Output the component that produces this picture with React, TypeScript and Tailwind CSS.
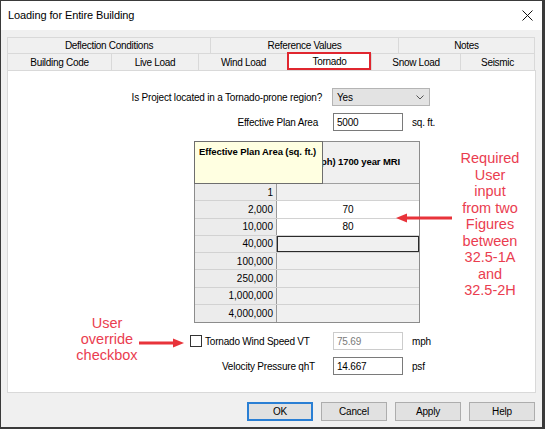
import React from "react";

const rows: [string, string][] = [
  ["1", ""],
  ["2,000", "70"],
  ["10,000", "80"],
  ["40,000", ""],
  ["100,000", ""],
  ["250,000", ""],
  ["1,000,000", ""],
  ["4,000,000", ""],
];

export default function App() {
  return (
    <div className="relative flex h-[429px] w-[545px] flex-col overflow-hidden border-l border-t border-b-2 border-r-[3px] border-[#3a3a3a] bg-[#f0f0f0] font-['Liberation_Sans',Arial,sans-serif] text-black">
      {/* Title bar */}
      <div className="flex h-[29px] shrink-0 items-center justify-between bg-white pl-[7px] pr-[8px]">
        <span className="text-[11px] tracking-[-0.1px]">Loading for Entire Building</span>
        <svg width="11" height="11" viewBox="0 0 11 11" className="mr-[1px]">
          <path d="M0.5 0.5 L10.5 10.5 M10.5 0.5 L0.5 10.5" stroke="#111" strokeWidth="1" />
        </svg>
      </div>

      {/* Body */}
      <div className="flex flex-1 flex-col px-[6px] pt-[7px]">
        {/* Tabs */}
        <div className="mr-[1px] text-[10px] tracking-[-0.3px]">
          <div className="flex h-[16px]">
            <div className="flex w-[203px] items-center justify-center border-l border-t border-[#d9d9d9]">Deflection Conditions</div>
            <div className="flex w-[188px] items-center justify-center border-l border-t border-[#d9d9d9]">Reference Values</div>
            <div className="flex flex-1 items-center justify-center border-l border-r border-t border-[#d9d9d9]">Notes</div>
          </div>
          <div className="flex h-[17px]">
            <div className="flex w-[104px] items-center justify-center border-l border-t border-[#d9d9d9]">Building Code</div>
            <div className="flex w-[87px] items-center justify-center border-l border-t border-[#d9d9d9]">Live Load</div>
            <div className="flex w-[90px] items-center justify-center border-l border-t border-[#d9d9d9]">Wind Load</div>
            <div className="relative flex w-[83px] items-center justify-center bg-white">
              Tornado
              <div className="absolute -left-[1px] -top-[1px] bottom-0 right-0 border-2 border-[#e0262f]" />
            </div>
            <div className="flex w-[89px] items-center justify-center border-l border-t border-[#d9d9d9]">Snow Load</div>
            <div className="flex flex-1 items-center justify-center border-l border-r border-t border-[#d9d9d9]">Seismic</div>
          </div>
        </div>

        {/* Panel */}
        <div className="flex h-[323px] flex-col border border-[#d9d9d9] bg-white pt-[17px] text-[10px] tracking-[-0.2px]">
          {/* Tornado-prone */}
          <div className="flex h-[18px] items-center">
            <div className="w-[324px] pr-[10px] text-right">Is Project located in a Tornado-prone region?</div>
            <div className="flex h-[18px] w-[98px] items-center justify-between border border-[#b4b4b4] bg-[#e3e3e3] pl-[4px] pr-[5px]">
              <span>Yes</span>
              <svg width="8" height="5" viewBox="0 0 8 5">
                <path d="M0.5 0.5 L4 4 L7.5 0.5" fill="none" stroke="#555" strokeWidth="1" />
              </svg>
            </div>
          </div>

          {/* Effective plan area */}
          <div className="mt-[7px] flex h-[18px] items-center">
            <div className="w-[325px] pr-[15px] text-right">Effective Plan Area</div>
            <div className="flex h-[18px] w-[70px] items-center border border-[#7a7a7a] bg-white pl-[3px]">5000</div>
            <span className="ml-[9px]">sq. ft.</span>
          </div>

          {/* Grid */}
          <div className="relative ml-[186px] mt-[10px] w-[226px] border border-[#8c8c8c] bg-[#f0f0f0]">
            <div className="flex h-[42px] border-b border-[#a0a0a0]">
              <div className="w-[82px] border-r border-[#a0a0a0]" />
              <div className="flex flex-1 items-center pl-[44px] text-[9.5px] font-bold tracking-[-0.1px]">ph) 1700 year MRI</div>
            </div>
            {rows.map(([a, b], i) => (
              <div key={a} className={`flex h-[17.25px] ${i < rows.length - 1 ? "border-b border-[#d2d2d2]" : ""}`}>
                <div className="flex w-[82px] items-center justify-end border-r border-[#9a9a9a] bg-[#ececec] pr-[3px] tracking-normal">{a}</div>
                <div
                  className={`flex flex-1 items-center justify-center tracking-normal ${
                    b ? "bg-white" : "bg-[#f0f0f0]"
                  } ${a === "40,000" ? "shadow-[inset_0_0_0_1px_#2a2a2a]" : ""}`}
                >
                  {b}
                </div>
              </div>
            ))}
            {/* Tooltip */}
            <div className="absolute -left-[1px] -top-[1px] h-[43px] w-[129px] border border-[#6e6e6e] bg-[#ffffe1] pl-[4px] pt-[3px] text-[9.5px] font-bold tracking-[-0.1px]">
              Effective Plan Area (sq. ft.)
            </div>
          </div>

          {/* Tornado wind speed */}
          <div className="mt-[9px] flex h-[18px] items-center">
            <div className="flex w-[325px] items-center pl-[182px]">
              <div className="h-[12px] w-[12px] border border-[#333] bg-white" />
              <span className="ml-[3px]">Tornado Wind Speed VT</span>
            </div>
            <div className="flex h-[18px] w-[70px] items-center border border-[#cccccc] bg-white pl-[3px] text-[#7a7a7a]">75.69</div>
            <span className="ml-[9px]">mph</span>
          </div>

          {/* Velocity pressure */}
          <div className="mt-[7px] flex h-[18px] items-center">
            <div className="w-[325px] pr-[18px] text-right">Velocity Pressure qhT</div>
            <div className="flex h-[18px] w-[70px] items-center border border-[#7a7a7a] bg-white pl-[3px]">14.667</div>
            <span className="ml-[9px]">psf</span>
          </div>
        </div>

        {/* Buttons */}
        <div className="mt-[9px] mr-[1px] flex justify-end gap-[8px] text-[10px] tracking-[-0.2px]">
          <button className="flex h-[19px] w-[66px] items-center justify-center border-2 border-[#2a7fd4] bg-[#e1e1e1]">OK</button>
          <button className="flex h-[19px] w-[66px] items-center justify-center border border-[#adadad] bg-[#e1e1e1]">Cancel</button>
          <button className="flex h-[19px] w-[66px] items-center justify-center border border-[#adadad] bg-[#e1e1e1]">Apply</button>
          <button className="flex h-[19px] w-[66px] items-center justify-center border border-[#adadad] bg-[#e1e1e1]">Help</button>
        </div>
      </div>

      {/* Annotations */}
      <div className="absolute left-[66px] top-[314px] w-[80px] text-center text-[14.5px] leading-[16px] text-[#ea3d4f]">
        User
        <br />
        override
        <br />
        checkbox
      </div>
      <svg className="absolute left-[138px] top-[336px]" width="46" height="12" viewBox="0 0 46 12">
        <line x1="0" y1="6" x2="36" y2="6" stroke="#e8333a" strokeWidth="3" />
        <polygon points="34,1.5 45,6 34,10.5" fill="#e8333a" />
      </svg>

      <div className="absolute left-[449px] top-[149px] w-[80px] text-center text-[14.5px] leading-[16.5px] text-[#ea3d4f]">
        Required
        <br />
        User
        <br />
        input
        <br />
        from two
        <br />
        Figures
        <br />
        between
        <br />
        32.5-1A
        <br />
        and
        <br />
        32.5-2H
      </div>
      <svg className="absolute left-[394px] top-[211px]" width="57" height="12" viewBox="0 0 57 12">
        <polygon points="1,6 12,1.5 12,10.5" fill="#e8333a" />
        <line x1="10" y1="6" x2="57" y2="6" stroke="#e8333a" strokeWidth="3" />
      </svg>
    </div>
  );
}
